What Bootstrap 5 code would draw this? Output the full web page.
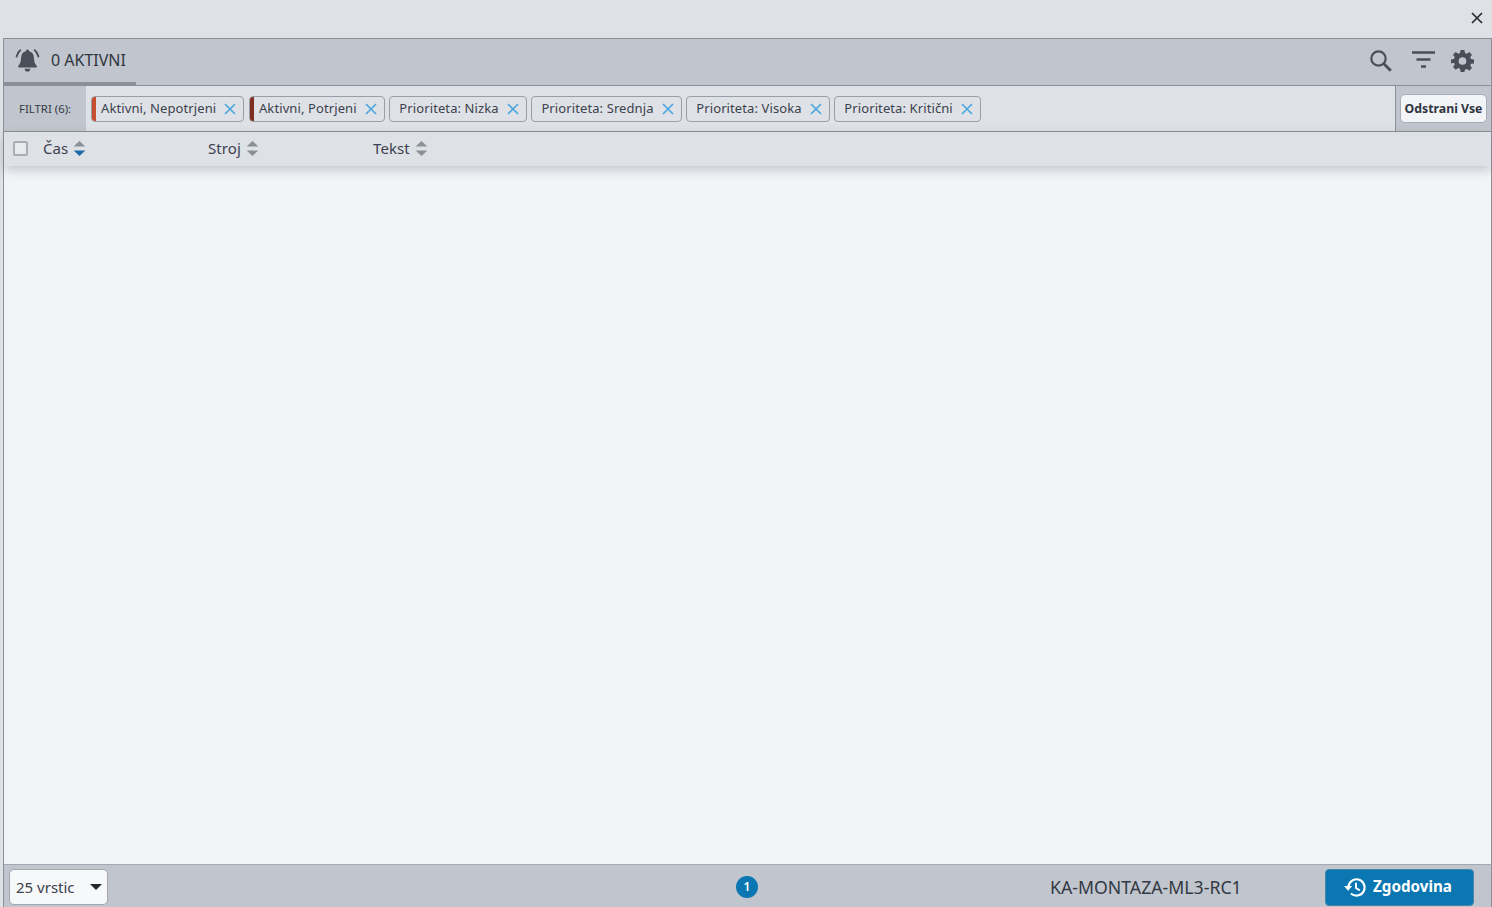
<!doctype html>
<html lang="sl">
<head>
<meta charset="utf-8">
<title>Aktivni alarmi</title>
<link href="https://cdn.jsdelivr.net/npm/bootstrap@5.3.0/dist/css/bootstrap.min.css" rel="stylesheet">
<style>
html,body{height:100%;overflow:hidden}
body{background:#dee1e6;font-family:"Noto Sans",sans-serif;color:#343a45;font-size:14px}
.top-strip{height:38px;padding-right:7px}
.close-x{width:16px;height:16px;display:block;margin-top:-2px}
.panel-box{height:869px;margin-left:3px;border:1px solid #8a8f98;border-bottom:0;background:#f2f4f8}
.head-bar{height:47px;background:#c1c5cd;border-bottom:1px solid #8a8f98;position:relative}
.tab-active{width:132px;height:46px;border-bottom:3px solid #8a8f98;padding:0 0 0 11px;gap:11px;font-size:16px;color:#2f3540}
.tab-text{padding-bottom:2px}
.tool-set{padding-right:17px;padding-bottom:4px}
.tool-search{margin-right:18px}
.tool-filter{margin-right:15px}
.filter-bar{height:46px;background:#dee1e6;border-bottom:1px solid #8a8f98}
.filter-label{width:82px;background:#c1c5cd;font-size:11.4px;padding-left:15px;color:#343a45}
.chip-row{gap:4.7px;padding-left:5px}
.chip-tag{height:26px;border:1px solid #9a9ea6;border-radius:4px;padding:0 7px 0 9px;font-size:13px;letter-spacing:.1px;gap:8px;color:#3c424d;white-space:nowrap;position:relative;overflow:hidden}
.chip-tag.marked::before{content:"";position:absolute;left:0;top:0;bottom:0;width:4px;background:var(--mark)}
.chip-x{width:12px;height:12px;display:block}
.clear-wrap{width:96px;background:#c1c5cd;border-left:1px solid #8a8f98;padding:0 4px}
.clear-btn{height:29px;width:87px;padding:1px 0 0;font-size:12.3px;font-weight:700;color:#2f3540;background:#f2f4f8;border:1px solid #a9adb4;border-radius:5px;white-space:nowrap}
.col-head{height:34px;background:#dee1e6;box-shadow:0 4px 10px rgba(80,85,95,.28);position:relative;z-index:1;padding:0 0 2px 9px;font-size:15px}
.check-box{width:15px;height:15px;border:2px solid #a9adb4;border-radius:2px;background:#e8eaee;margin-right:15px;flex:none}
.col-cell{width:165px;gap:5px;color:#3c424d;letter-spacing:.1px}
.sort-mark{display:block;width:13px;height:19px;flex:none}
.foot-bar{height:43px;background:#c1c5cd;border-top:1px solid #a4a8b0;padding:2px 17px 0 5px;position:relative}
.rows-select{width:99px;height:36px;background:#f7f8fa;border:1px solid #a4a8b0;border-radius:5px;padding:0 4px 0 6px;font-size:15px;color:#3c424d}
.caret-down{width:0;height:0;border-left:6.5px solid transparent;border-right:6.5px solid transparent;border-top:6px solid #22262d;margin-right:1px}
.page-dot{position:absolute;left:732px;top:11px;width:22px;height:22px;border-radius:50%;background:#0b77b2;color:#fff;font-size:12px;font-weight:600}
.machine-name{position:absolute;left:1046px;top:10px;font-size:17.7px;line-height:24px;color:#343a45}
.history-btn{width:149px;height:37px;background:#0b77b2;border:1px solid #4a86a8;border-radius:4px;color:#fff;font-weight:700;font-size:15.2px;gap:6px;padding:0 3px 0 0}
.history-btn:hover{background:#0b77b2;color:#fff}
.history-text{padding-bottom:2px}
</style>
</head>
<body>
<div class="top-strip d-flex justify-content-end align-items-center">
  <svg class="close-x" viewBox="0 0 16 16" aria-label="Zapri"><path d="M3 3l10 10M13 3L3 13" stroke="#22262d" stroke-width="1.6" fill="none"/></svg>
</div>
<div class="panel-box d-flex flex-column">
  <div class="head-bar d-flex justify-content-between align-items-stretch flex-none">
    <div class="tab-active d-flex align-items-center">
      <svg width="25" height="25" viewBox="0 0 25 25" aria-hidden="true">
        <path d="M12.5 1.5a1.6 1.6 0 0 1 1.6 1.7c3.2.7 4.7 3.3 4.8 6.6.1 3.9.9 6 2.9 8.2.4.6 0 1.4-.7 1.4H3.9c-.7 0-1.1-.8-.7-1.4 2-2.200 2.800-4.300 2.900-8.200.1-3.300 1.600-5.900 4.800-6.600a1.600 1.600 0 0 1 1.600-1.700zM9.700 20.800h5.600a2.800 2.800 0 0 1-5.600 0z" fill="#494e58"/>
        <path d="M5.300 2.200C3.300 3.700 2 6 1.600 8.500M19.700 2.200c2 1.500 3.300 3.800 3.700 6.300" stroke="#494e58" stroke-width="1.900" fill="none" stroke-linecap="round"/>
      </svg>
      <span class="tab-text">0 AKTIVNI</span>
    </div>
    <div class="tool-set d-flex align-items-center">
      <svg class="tool-search" width="25" height="25" viewBox="0 0 25 25" aria-label="Iskanje"><circle cx="10.500" cy="10.500" r="7.200" stroke="#494e58" stroke-width="2.200" fill="none"/><path d="M15.800 15.800l7 7" stroke="#494e58" stroke-width="2.800"/></svg>
      <svg class="tool-filter" width="25" height="22" viewBox="0 0 25 22" aria-label="Filter"><path d="M1 3.500h23M5.500 10.500h14M10 17.500h5" stroke="#494e58" stroke-width="2.400" fill="none"/></svg>
      <svg width="23" height="23" viewBox="0 0 24 24" aria-label="Nastavitve"><path fill="#494e58" fill-rule="evenodd" d="M10 1h4l.6 3.100 1.900.8L19.100 3.100l2.800 2.800-1.800 2.600.8 1.900L24 11v4l-3.100.4-.8 1.900 1.800 2.600-2.800 2.800-2.600-1.800-1.900.8L14 24h-4l-.6-3.300-1.900-.8-2.600 1.800-2.800-2.800 1.800-2.600-.8-1.900L0 15v-4l3.100-.6.800-1.900-1.800-2.600 2.800-2.800 2.600 1.800 1.900-.8zM12 8.500a4 4 0 1 0 0 8 4 4 0 0 0 0-8z"/></svg>
    </div>
  </div>
  <div class="filter-bar d-flex align-items-stretch">
    <div class="filter-label d-flex align-items-center">FILTRI (6):</div>
    <div class="chip-row d-flex align-items-center flex-grow-1">
      <span class="chip-tag marked d-inline-flex align-items-center" style="--mark:#c5502f">Aktivni, Nepotrjeni<svg class="chip-x" viewBox="0 0 12 12"><path d="M1 1l10 10M11 1L1 11" stroke="#4da6dc" stroke-width="1.700"/></svg></span>
      <span class="chip-tag marked d-inline-flex align-items-center" style="--mark:#7e2f22">Aktivni, Potrjeni<svg class="chip-x" viewBox="0 0 12 12"><path d="M1 1l10 10M11 1L1 11" stroke="#4da6dc" stroke-width="1.700"/></svg></span>
      <span class="chip-tag d-inline-flex align-items-center">Prioriteta: Nizka<svg class="chip-x" viewBox="0 0 12 12"><path d="M1 1l10 10M11 1L1 11" stroke="#4da6dc" stroke-width="1.700"/></svg></span>
      <span class="chip-tag d-inline-flex align-items-center">Prioriteta: Srednja<svg class="chip-x" viewBox="0 0 12 12"><path d="M1 1l10 10M11 1L1 11" stroke="#4da6dc" stroke-width="1.700"/></svg></span>
      <span class="chip-tag d-inline-flex align-items-center">Prioriteta: Visoka<svg class="chip-x" viewBox="0 0 12 12"><path d="M1 1l10 10M11 1L1 11" stroke="#4da6dc" stroke-width="1.700"/></svg></span>
      <span class="chip-tag d-inline-flex align-items-center">Prioriteta: Kritični<svg class="chip-x" viewBox="0 0 12 12"><path d="M1 1l10 10M11 1L1 11" stroke="#4da6dc" stroke-width="1.700"/></svg></span>
    </div>
    <div class="clear-wrap d-flex align-items-center"><button type="button" class="btn clear-btn">Odstrani Vse</button></div>
  </div>
  <div class="col-head d-flex align-items-center">
    <span class="check-box"></span>
    <div class="col-cell d-flex align-items-center">Čas<svg class="sort-mark" viewBox="0 0 12 18"><path d="M6 2l5.500 5H.5z" fill="#8a8f98"/><path d="M6 16l5.500-5H.5z" fill="#1d6aa8"/></svg></div>
    <div class="col-cell d-flex align-items-center">Stroj<svg class="sort-mark" viewBox="0 0 12 18"><path d="M6 2l5.500 5H.5z" fill="#8a8f98"/><path d="M6 16l5.500-5H.5z" fill="#8a8f98"/></svg></div>
    <div class="col-cell d-flex align-items-center">Tekst<svg class="sort-mark" viewBox="0 0 12 18"><path d="M6 2l5.500 5H.5z" fill="#8a8f98"/><path d="M6 16l5.500-5H.5z" fill="#8a8f98"/></svg></div>
  </div>
  <div class="flex-grow-1"></div>
  <div class="foot-bar d-flex justify-content-between align-items-center">
    <div class="rows-select d-flex justify-content-between align-items-center"><span>25 vrstic</span><span class="caret-down"></span></div>
    <span class="page-dot d-flex justify-content-center align-items-center">1</span>
    <span class="machine-name">KA-MONTAZA-ML3-RC1</span>
    <button type="button" class="btn history-btn d-flex justify-content-center align-items-center">
      <svg width="23" height="23" viewBox="0 0 24 24" aria-hidden="true"><path d="M4.500 12a8.500 8.500 0 1 1 2.700 6.200" stroke="#fff" stroke-width="2.200" fill="none"/><path d="M0 10.500h8.500l-4.200 5z" fill="#fff"/><path d="M12.500 7v5.500l4 2.500" stroke="#fff" stroke-width="2" fill="none"/></svg>
      <span class="history-text">Zgodovina</span>
    </button>
  </div>
</div>
<script src="https://cdn.jsdelivr.net/npm/bootstrap@5.3.0/dist/js/bootstrap.bundle.min.js"></script>
</body>
</html>
